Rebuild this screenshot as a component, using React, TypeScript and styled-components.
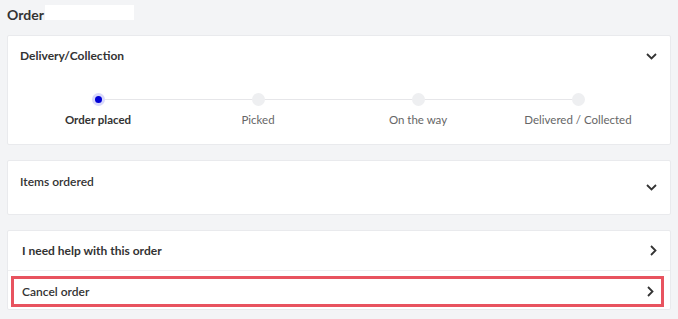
import { createGlobalStyle } from 'styled-components'
import styled from 'styled-components'

const GlobalStyle = createGlobalStyle`
  html, body {
    margin: 0;
    background: #f3f4f6;
    font-family: Lato, "Noto Sans", sans-serif;
    color: #333;
  }
`

const steps = ['Order placed', 'Picked', 'On the way', 'Delivered / Collected']
const activeStep = 0

const Page = styled.div`
  display: flex;
  flex-direction: column;
  gap: 15px;
  padding: 0 7px;
  width: 664px;
`

const TitleRow = styled.div`
  display: flex;
  align-items: center;
  gap: 1px;
  height: 20px;
  padding-top: 5px;
  margin-bottom: -5px;
`

const Title = styled.h1`
  margin: 0;
  font-size: 14px;
  font-weight: 700;
  line-height: 20px;
  color: #333;
`

const Redacted = styled.div`
  width: 89px;
  height: 15px;
  margin-top: -5px;
  background: #fff;
`

const Card = styled.section<{ $minHeight?: number }>`
  display: flex;
  flex-direction: column;
  background: #fff;
  border: 1px solid #e9eaed;
  border-radius: 2px;
  min-height: ${(p) => p.$minHeight ?? 0}px;
  box-sizing: border-box;
`

const CardHeader = styled.div`
  display: flex;
  justify-content: space-between;
  align-items: center;
  padding: 12px 13px 0 12px;
`

const Heading = styled.span<{ $weight?: number }>`
  font-size: 12px;
  font-weight: ${(p) => p.$weight ?? 700};
  line-height: 16px;
  color: #333;
`

const Stepper = styled.ol`
  position: relative;
  display: grid;
  grid-template-columns: repeat(4, 160px);
  margin: 29px 14px 16px 10px;
  padding: 0;
  list-style: none;
`

const StepLine = styled.div`
  position: absolute;
  top: 6px;
  left: 80px;
  right: 80px;
  height: 1px;
  background: #e6e6e9;
`

const Step = styled.li`
  display: flex;
  flex-direction: column;
  align-items: center;
  gap: 6px;
  position: relative;
`

const Dot = styled.span<{ $active: boolean }>`
  display: flex;
  align-items: center;
  justify-content: center;
  width: 13px;
  height: 13px;
  border-radius: 50%;
  background: ${(p) => (p.$active ? '#d9d9fb' : '#eeeff1')};

  &::after {
    content: '';
    display: ${(p) => (p.$active ? 'block' : 'none')};
    width: 7px;
    height: 7px;
    border-radius: 50%;
    background: #0000d6;
  }
`

const StepLabel = styled.span<{ $active: boolean }>`
  font-size: 11.5px;
  line-height: 16px;
  font-weight: ${(p) => (p.$active ? 700 : 400)};
  color: ${(p) => (p.$active ? '#333' : '#666')};
  white-space: nowrap;
`

const ItemsCard = styled(Card)`
  flex-direction: row;
  justify-content: space-between;
  padding: 13px 13px 0 12px;
`

const IconSlot = styled.span`
  display: flex;
  align-self: center;
  margin-top: -13px;
`

const LinkRow = styled.div<{ $highlight?: boolean }>`
  display: flex;
  justify-content: space-between;
  align-items: center;
  height: 39px;
  padding: 0 13px 0 14px;
  box-sizing: border-box;
  ${(p) =>
    p.$highlight &&
    `
    height: 31px;
    margin: 5px 6px 2px 3px;
    padding: 0 7px 0 8px;
    border: 3px solid #e8535f;
  `}
`

const Divider = styled.div`
  height: 1px;
  background: #eeeff1;
`

const ChevronDown = () => (
  <svg width="11" height="7" viewBox="0 0 11 7" fill="none">
    <path d="M1 1l4.5 4.5L10 1" stroke="#333" strokeWidth="1.8" />
  </svg>
)

const ChevronRight = () => (
  <svg width="7" height="11" viewBox="0 0 7 11" fill="none">
    <path d="M1 1l4.5 4.5L1 10" stroke="#333" strokeWidth="1.8" />
  </svg>
)

export default function App() {
  return (
    <>
      <GlobalStyle />
      <Page>
        <TitleRow>
          <Title>Order</Title>
          <Redacted />
        </TitleRow>

        <Card $minHeight={110}>
          <CardHeader>
            <Heading>Delivery/Collection</Heading>
            <ChevronDown />
          </CardHeader>
          <Stepper>
            <StepLine />
            {steps.map((s, i) => (
              <Step key={s}>
                <Dot $active={i === activeStep} />
                <StepLabel $active={i === activeStep}>{s}</StepLabel>
              </Step>
            ))}
          </Stepper>
        </Card>

        <ItemsCard $minHeight={55}>
          <Heading $weight={600}>Items ordered</Heading>
          <IconSlot>
            <ChevronDown />
          </IconSlot>
        </ItemsCard>

        <Card>
          <LinkRow>
            <Heading>I need help with this order</Heading>
            <ChevronRight />
          </LinkRow>
          <Divider />
          <LinkRow $highlight>
            <Heading $weight={600}>Cancel order</Heading>
            <ChevronRight />
          </LinkRow>
        </Card>
      </Page>
    </>
  )
}
